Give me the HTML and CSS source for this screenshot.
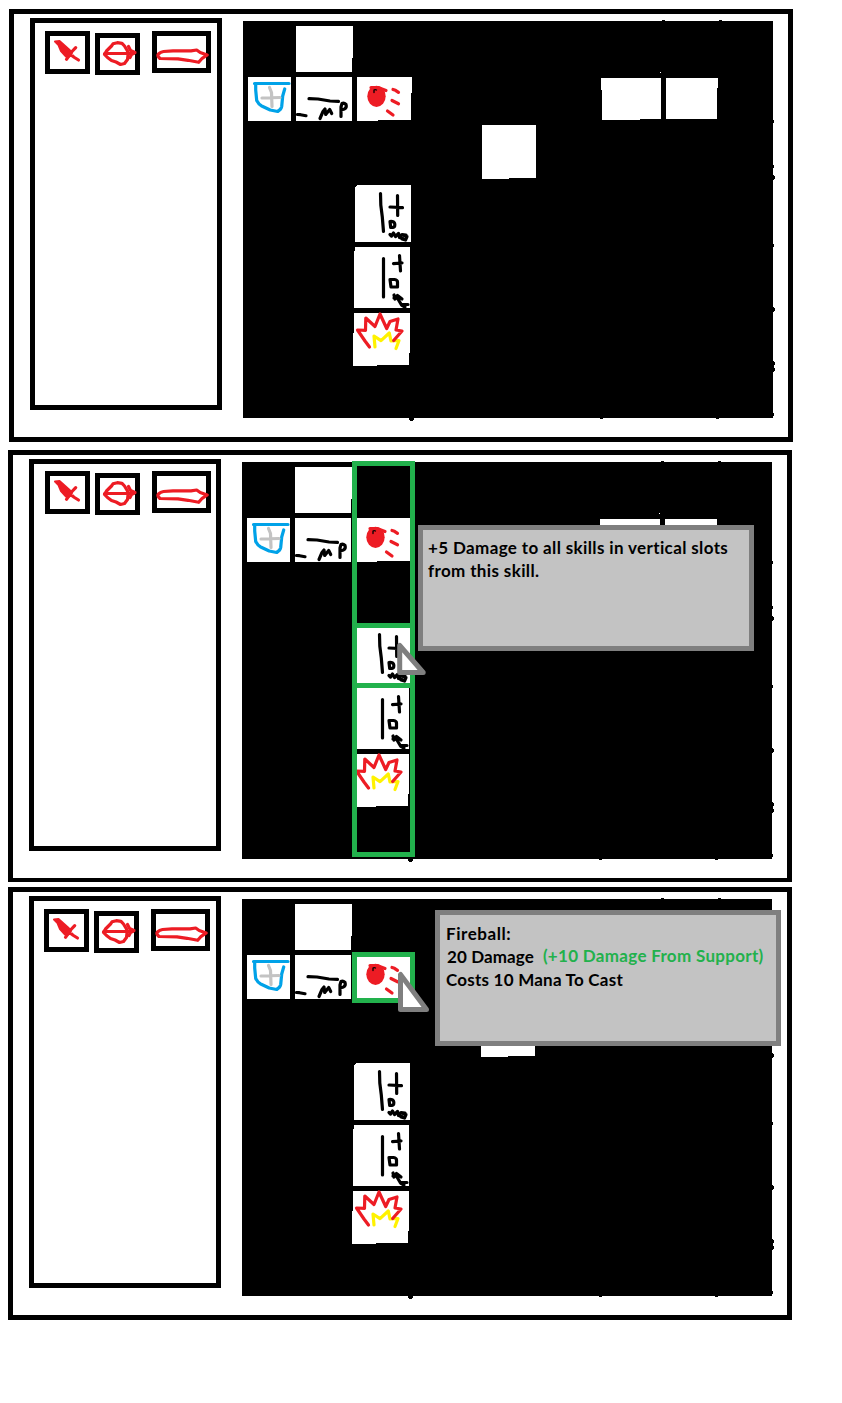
FILE: index.html
```html
<!DOCTYPE html>
<html lang="en">
<head>
<meta charset="utf-8">
<title>Skill grid</title>
<link rel="stylesheet" href="styles.css">
</head>
<body>
<svg class="defs" aria-hidden="true">
  <defs>
    <g id="dagger">
      <path d="M55 41.500L59.500 41 64 45 69 49.500 72 52.500 69.500 56.500 66 56.500 61 51 58.500 45z" fill="#ed1c24" stroke-width="2"/>
      <path d="M75.700 47.700L72 51.500 66.500 59.300M68 53.500L78.500 60M69 55l4 1"/>
    </g>
    <g id="bow">
      <path d="M104.500 54.300L106.500 51 111.500 46 113 43.800 117.300 42.700 122 43.300 124.500 46 127.500 51 128 55 127.500 59.500 124.500 63.500 120.500 64.500 116 62 111.500 60.500 107.500 57.500zM104.500 53.500h29"/>
      <path d="M128.500 46.500l2 4 4.500 2-3.500 2-1.500 3"/>
    </g>
    <g id="sword">
      <path d="M159 57.500q-2-2-.5-3.500 2-2 5-2.500l9.500-.7h18l5.700-.8 3.500 2.500 7 2.500-5 3.300-3.500 4-10.700-2-10-1.500-18-.3z"/>
    </g>
    <g id="board">
      <path class="ground" d="M243 21H662v-1h3v1H719v-1h3v1H773V120h1v3h-1V165h1v3h-1v7h1v1h1v3h-1v1h-1V244h1v3h-1V307h1v1h1v3h-1v1h-1v49h1v1h1v3h-1v3h1v3h-1v1h-1v41h1v3h-1v2H719v1h-3v-1H603v1h-3v-1H414v2h-1v1h-3v-1h-1v-2H243z"/>
      <g class="slot">
        <path d="M296 26h57v32h-1v14h-56z"/>
        <path d="M248 77h43v44h-43z"/>
        <path d="M296 77h56v44h-56z"/>
        <path d="M357 77h55v16h-1v27h-33v1h-21z"/>
        <path d="M601 78h60v41h-21v1h-38v-30h-1z"/>
        <path d="M666 78h52v10h-1v31h-51z"/>
        <path d="M660 72h1v1h-1z"/>
        <path d="M482 125h54v53h-27v1h-27z"/>
        <path d="M357 185h54v57h-56v-55h1v-1h1z"/>
        <path d="M355 247h55v61h-56v-57h1z"/>
        <path d="M354 313h56v40h-1v12h-32v1h-24v-33h1z"/>
      </g>
      <path class="blue" d="M254.500 83.500H289M255.700 85v5l1 10.500q2 4 5 5.500l8.500 4 7.500 1.500q3.500-2 4-5l1-10.500 2-7"/>
      <path class="gray" d="M269.500 87.500l2 5 .5 14M262 98l18-.5"/>
      <path class="ink" d="M309 98.700l9 .3 12 2 8.500.4M297.500 114.500l3 .2 5.500 1M320 118.500l3-7 2-2.500.7 5.500 4-5 2 4"/>
      <path class="ink" d="M341 116.500V107l1-3.500q2-1 4 1 1 3-1.500 4.500l-3.500 1"/>
      <ellipse cx="376.500" cy="96.300" rx="9.200" ry="10.600" fill="#ed1c24"/>
      <path class="red" d="M371 87.500L378 87.500 386 90.500"/>
      <path d="M374 92.500v-2.500q1-.8 2.500 0" stroke="#000" stroke-width="1.300"/>
      <path class="red" d="M393 89.500l2.500.8 3 2M392 100.500l6.500 3.300M387.500 111l5.500 4"/>
      <g class="ink">
        <path d="M380.500 193.500l.3 11.500 1.500 12 1.200 14.500M397.500 195.500l.2 20M390 207l12.500.6"/>
        <path d="M390 221.500l.7 6q3.500.2 4-1.500.5-3-1-4-1.700-.8-3.700-.5z"/>
        <path d="M390 234.500L391.500 236 393.500 233 395.500 236.500 398.500 233.500 399.500 237.500 403 238.500M406 235L402 234.500 400.500 236.500M404 235.500L407 236.500 405.500 240 402 239"/>
        <path d="M383.500 258.500V297M399.500 255.500l1 15.500M393.500 263.700l8.500-.7"/>
        <path d="M390 279.500h4.500q3 .5 3 2.500v5h-6.500z"/>
        <path d="M394 295L395 299 397.500 295.500 402 299M394 298L399.500 297.500M398 299L401.500 305 405 307M402 304.500L408 304.500"/>
      </g>
      <path class="yellow" d="M375 347l-1-11 7 4.700 8.300-7.700 1.700 8 8-.5-3 8"/>
      <path class="red" d="M369.500 347l-4.500-6-7.500-11 8 .3.300-12.300 9.200 8.500 5-12.500 6.700 14.500 3.300-7 8-2.500-2 11 6 1-8.300 9.500"/>
    </g>
  </defs>
</svg>
<main class="screens">
  <section class="screen">
    <aside class="sidebar">
      <div class="tool"><svg class="icon" viewBox="50 36 35 33"><use href="#dagger"/></svg></div>
      <div class="tool bow"><svg class="icon" viewBox="100 38 35 32"><use href="#bow"/></svg></div>
      <div class="tool sword"><svg class="icon" viewBox="157 36 49 32"><use href="#sword"/></svg></div>
    </aside>
    <div class="board"><svg class="grid" viewBox="243 21 530 397"><use href="#board"/></svg></div>
  </section>

  <section class="screen second">
    <aside class="sidebar">
      <div class="tool"><svg class="icon" viewBox="50 36 35 33"><use href="#dagger"/></svg></div>
      <div class="tool bow"><svg class="icon" viewBox="100 38 35 32"><use href="#bow"/></svg></div>
      <div class="tool sword"><svg class="icon" viewBox="157 36 49 32"><use href="#sword"/></svg></div>
    </aside>
    <div class="board">
      <svg class="grid" viewBox="243 21 530 397"><use href="#board"/></svg>
      <div class="highlight column"><div class="picked"></div></div>
      <div class="tooltip support">
        <p class="line"><span class="effect">+5 Damage to all skills in vertical slots</span></p>
        <p class="line"><span class="effect">from this skill.</span></p>
      </div>
      <svg class="cursor over-support" viewBox="0 0 29 32"><path d="M2.700 2.500v27h23.500z"/></svg>
    </div>
  </section>

  <section class="screen third">
    <aside class="sidebar">
      <div class="tool"><svg class="icon" viewBox="50 36 35 33"><use href="#dagger"/></svg></div>
      <div class="tool bow"><svg class="icon" viewBox="100 38 35 32"><use href="#bow"/></svg></div>
      <div class="tool sword"><svg class="icon" viewBox="157 36 49 32"><use href="#sword"/></svg></div>
    </aside>
    <div class="board">
      <svg class="grid" viewBox="243 21 530 397"><use href="#board"/></svg>
      <div class="highlight single"></div>
      <div class="tooltip skill">
        <p class="line"><span class="name">Fireball:</span></p>
        <p class="line"><span class="damage">20 Damage</span><span class="bonus">(+10 Damage From Support)</span></p>
        <p class="line"><span class="cost">Costs 10 Mana To Cast</span></p>
      </div>
      <svg class="cursor over-skill" viewBox="0 0 31 41"><path d="M2.500 2.500v35h26z"/></svg>
    </div>
  </section>
</main>
</body>
</html>
```
FILE: styles.css
```css
* { box-sizing: border-box; }
body { margin: 0; background: #fff; }
.defs { display: block; width: 0; height: 0; }
.screens { padding: 9px 0 0 8px; height: 1403px; }
.screen {
  display: flex;
  align-items: flex-start;
  gap: 21px;
  width: 784px;
  height: 433px;
  margin-left: 1px;
  padding: 4px 0 0 16px;
  border: 5px solid #000;
}
.second { height: 432px; margin: 8px 0 5px; border-bottom-width: 4px; }
.third { margin-left: 0; }

.sidebar {
  display: flex;
  align-items: flex-start;
  width: 192px;
  height: 392px;
  padding: 8px 0 0 10px;
  border: 5px solid #000;
}
.second .sidebar { padding: 7px 0 0 11px; }
.tool { flex: none; width: 45px; height: 43px; border: 5px solid #000; }
.tool.bow { height: 42px; margin: 2px 12px 0 5px; }
.tool.sword { width: 59px; height: 42px; }
.icon {
  display: block;
  width: 100%;
  height: 100%;
  overflow: visible;
  fill: none;
  stroke: #ed1c24;
  stroke-width: 3.2;
  stroke-linecap: round;
  stroke-linejoin: round;
}

.board { position: relative; flex: none; width: 530px; height: 397px; margin-top: 3px; }
.grid {
  display: block;
  width: 530px;
  height: 397px;
  overflow: visible;
  fill: none;
  stroke-width: 3.2;
  stroke-linecap: round;
  stroke-linejoin: round;
}
.ground { fill: #000; shape-rendering: crispEdges; }
.slot { fill: #fff; shape-rendering: crispEdges; }
.ink { stroke: #000; }
.red { stroke: #ed1c24; }
.yellow { stroke: #fff200; }
.blue { stroke: #00a2e8; }
.gray { stroke: #c3c3c3; }

.highlight { position: absolute; border: 5px solid #22b14c; }
.column { left: 110px; top: -1px; width: 63px; height: 396px; padding-top: 157px; }
.picked { height: 65px; border: solid #22b14c; border-width: 5px 0; }
.single { left: 110px; top: 53px; width: 63px; height: 51px; }

.tooltip {
  position: absolute;
  border: 5px solid #7f7f7f;
  background: #c3c3c3;
  color: #000;
  font: 700 17px/23px Lato, "Open Sans", sans-serif;
  font-variant-ligatures: none;
}
.support { left: 176px; top: 63px; width: 336px; height: 126px; padding: 6px 0 0 5px; }
.skill { left: 193px; top: 11px; width: 346px; height: 136px; padding: 7px 0 0 6px; }
.line { display: flex; margin: 0; white-space: nowrap; }
.effect { letter-spacing: 0.37px; }
.name { letter-spacing: 0.55px; }
.damage { padding-left: 1px; letter-spacing: 0.1px; }
.bonus { margin: -1px 0 1px 9px; color: #22b14c; letter-spacing: 0.31px; }
.cost { letter-spacing: 0.23px; }

.cursor {
  position: absolute;
  overflow: visible;
  fill: #fff;
  stroke: #7f7f7f;
  stroke-width: 5;
  stroke-linejoin: round;
}
.over-support { left: 155px; top: 181px; width: 29px; height: 32px; }
.over-skill { left: 156px; top: 73px; width: 31px; height: 41px; }
```
